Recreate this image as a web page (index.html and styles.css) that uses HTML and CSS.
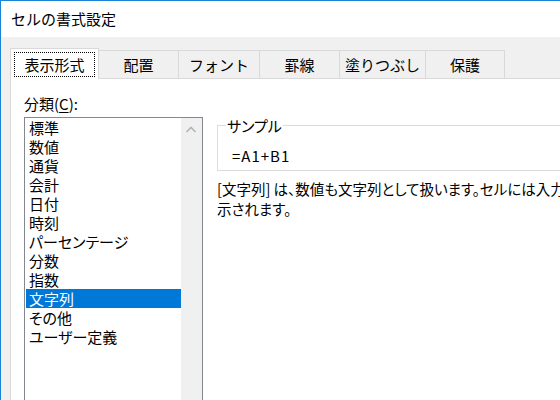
FILE: index.html
```html
<!DOCTYPE html>
<html lang="ja">
<head>
<meta charset="utf-8">
<title>セルの書式設定</title>
<link rel="stylesheet" href="styles.css">
</head>
<body>
<div class="window">
  <div class="titlebar">セルの書式設定</div>
  <div class="client">
    <div class="tabs">
      <div class="tab active"><span class="focus">表示形式</span></div>
      <div class="tab w80">配置</div>
      <div class="tab w81">フォント</div>
      <div class="tab w80">罫線</div>
      <div class="tab w86">塗りつぶし</div>
      <div class="tab w79">保護</div>
    </div>
    <div class="page">
      <div class="left">
        <div class="label">分類(<u>C</u>):</div>
        <div class="listbox">
          <ul class="items">
            <li>標準</li>
            <li>数値</li>
            <li>通貨</li>
            <li>会計</li>
            <li>日付</li>
            <li>時刻</li>
            <li>パーセンテージ</li>
            <li>分数</li>
            <li>指数</li>
            <li class="sel">文字列</li>
            <li>その他</li>
            <li>ユーザー定義</li>
          </ul>
          <div class="scrollbar">
            <svg class="arrow" width="21" height="21" viewBox="0 0 21 21"><polyline points="5.5,14 10,9.5 14.5,14" fill="none" stroke="#b4b4b4" stroke-width="1.6"/></svg>
          </div>
        </div>
      </div>
      <div class="right">
        <fieldset class="sample">
          <legend>サンプル</legend>
          <div class="sample-value">=A1+B1</div>
        </fieldset>
        <p class="desc"><span class="line">[文字列] は、数値も文字列として扱います。セルには入力したとおりに表</span><br><span class="line">示されます。</span></p>
      </div>
    </div>
  </div>
</div>
</body>
</html>
```

FILE: styles.css
```css
html, body {
  margin: 0;
  padding: 0;
  overflow: hidden;
  background: #f0f0f0;
}
body {
  width: 560px;
  height: 400px;
  font-family: "Noto Sans CJK JP", "Noto Sans", sans-serif;
  color: #000;
}
.window {
  width: 720px;
  height: 400px;
  box-sizing: border-box;
  border-top: 1px solid #1883d7;
  border-left: 1px solid #1883d7;
  background: #f0f0f0;
  display: flex;
  flex-direction: column;
}
.titlebar {
  height: 36px;
  flex: none;
  background: #fff;
  padding-left: 10px;
  font-size: 15px;
  line-height: 36px;
}
.client {
  flex: 1;
  min-height: 0;
  padding: 11px 0 0 9px;
  display: flex;
  flex-direction: column;
}
.tabs {
  display: flex;
  align-items: flex-end;
  height: 30px;
  flex: none;
}
.tab {
  box-sizing: border-box;
  height: 28px;
  border-top: 1px solid #d9d9d9;
  border-right: 1px solid #d9d9d9;
  display: flex;
  align-items: center;
  justify-content: center;
  padding-top: 1px;
  font-size: 15px;
  line-height: 20px;
}
.tab.w79 { width: 79px; }
.tab.w80 { width: 80px; }
.tab.w81 { width: 81px; }
.tab.w86 { width: 86px; }
.tab.active {
  width: 89px;
  height: 31px;
  margin-bottom: -1px;
  border: 1px solid #d9d9d9;
  border-bottom: none;
  background: #fff;
  padding: 3px 3px 2px 3px;
  position: relative;
  z-index: 1;
}
.focus {
  flex: 1;
  align-self: stretch;
  border: 1px dotted #000;
  display: flex;
  align-items: center;
  justify-content: center;
}
.page {
  flex: 1;
  min-height: 0;
  background: #fff;
  border: 1px solid #d9d9d9;
  border-bottom: none;
  padding: 15px 0 0 13px;
  display: flex;
  gap: 14px;
}
.left {
  width: 179px;
  flex: none;
  display: flex;
  flex-direction: column;
}
.label {
  font-size: 15px;
  line-height: 19px;
  height: 19px;
}
.label u {
  text-underline-offset: 2px;
}
.listbox {
  margin-top: 4px;
  flex: 1;
  border: 1px solid #828790;
  border-bottom: none;
  display: flex;
}
.items {
  list-style: none;
  margin: 0;
  padding: 0 0 0 1px;
  width: 155px;
  flex: none;
}
.items li {
  height: 19px;
  line-height: 19px;
  padding-left: 3px;
  font-size: 15px;
  white-space: nowrap;
  font-feature-settings: "palt";
}
.items li.sel {
  background: #0078d7;
  color: #fff;
}
.scrollbar {
  width: 21px;
  flex: none;
  background: #f0f0f0;
}
.arrow {
  display: block;
}
.right {
  flex: 1;
  padding-top: 23px;
}
.sample {
  margin: 0;
  border: 1px solid #dcdcdc;
  padding: 0 0 4px 8px;
  min-width: 0;
}
.sample legend {
  padding: 0 1px;
  font-size: 15px;
  line-height: 17px;
  font-feature-settings: "palt";
}
.sample-value {
  margin-top: 12px;
  padding-left: 6px;
  font-size: 15px;
  line-height: 20px;
  letter-spacing: 1px;
}
.desc {
  margin: 8px 0 0 0;
  font-size: 14.5px;
  line-height: 20px;
  white-space: nowrap;
  font-feature-settings: "palt";
}
```
